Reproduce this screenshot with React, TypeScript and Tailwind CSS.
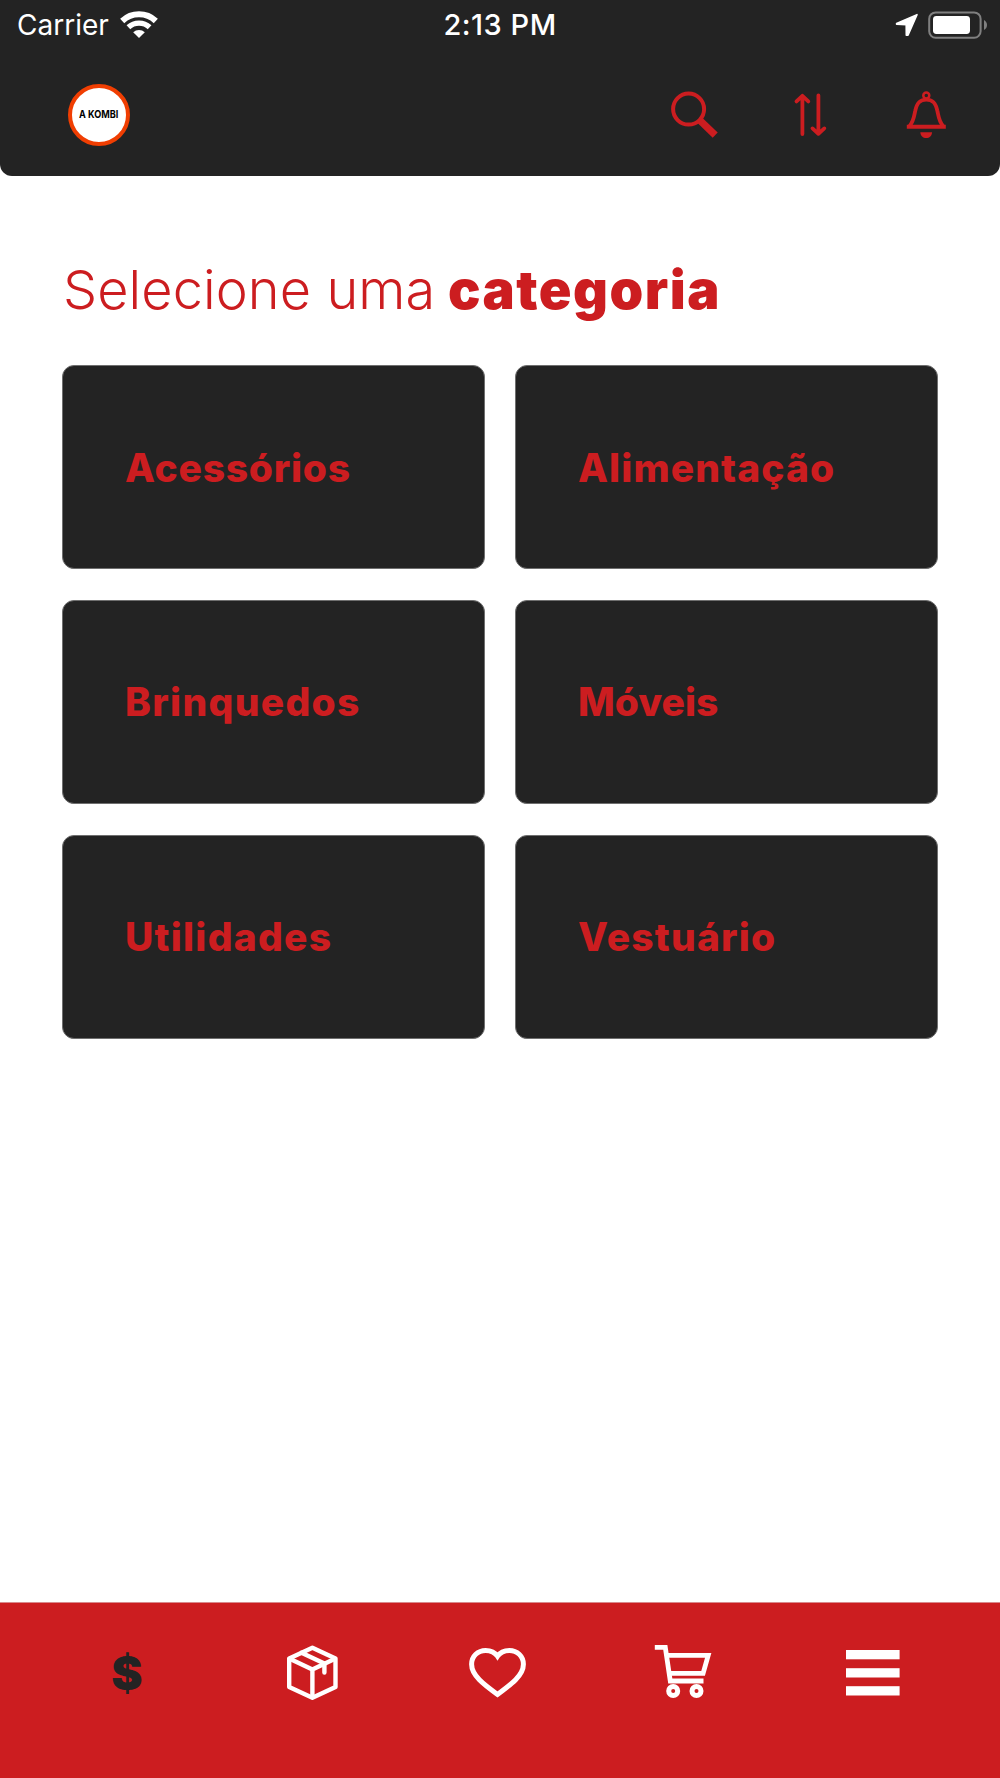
import type { ReactNode } from 'react'

type Category = {
  name: string
  tracking: string
}

const categories: Category[] = [
  { name: 'Acessórios', tracking: 'tracking-[0.75px]' },
  { name: 'Alimentação', tracking: 'tracking-[1.1px]' },
  { name: 'Brinquedos', tracking: 'tracking-[1.3px]' },
  { name: 'Móveis', tracking: 'tracking-[0px]' },
  { name: 'Utilidades', tracking: 'tracking-[1.25px]' },
  { name: 'Vestuário', tracking: 'tracking-[1.2px]' },
]

function StatusBar() {
  return (
    <div className="grid h-[50px] grid-cols-[1fr_auto_1fr] items-center pr-3 pl-[17px] text-white">
      <div className="flex items-center gap-[11px]">
        <span className="text-[28px] leading-[50px] font-normal">Carrier</span>
        <svg width="38" height="28" viewBox="0 0 38 28" fill="none" stroke="currentColor">
          <path d="M2.2 10 A24.5 24.5 0 0 1 35.8 10" strokeWidth="6" />
          <path d="M8.4 16.3 A15.5 15.5 0 0 1 29.6 16.3" strokeWidth="5.4" />
          <path d="M13.2 21.3 A8.4 8.4 0 0 1 24.8 21.3 L19 27 Z" fill="currentColor" stroke="none" />
        </svg>
      </div>
      <span className="-ml-[5px] text-center text-[29px] leading-[50px] font-medium tracking-[0.5px]">2:13 PM</span>
      <div className="flex items-center justify-end gap-[9px]">
        <svg width="24" height="24" viewBox="895 13 24 24" fill="currentColor" stroke="currentColor" strokeWidth="1.6" strokeLinejoin="round">
          <path d="M896.6 23.4 L917 14.7 L908 35.2 L906.3 35.2 L906.2 24.7 L896.6 24.3 Z" />
        </svg>
        <svg width="60" height="28" viewBox="928 10 60 28">
          <rect x="929.2" y="11.4" width="51.4" height="25.4" rx="6.5" fill="none" stroke="#808080" strokeWidth="2" />
          <rect x="933" y="15" width="37" height="18" rx="3.4" fill="#fff" />
          <path d="M984 19 C988 21 988 27 984 29 Z" fill="#808080" />
        </svg>
      </div>
    </div>
  )
}

function Logo() {
  return (
    <div className="flex h-[62px] w-[62px] items-center justify-center rounded-full border-4 border-[#f03e02] bg-white pb-[2px]">
      <span className="scale-x-[0.83] text-[11px] leading-none font-bold whitespace-nowrap text-black">A KOMBI</span>
    </div>
  )
}

function SearchIcon() {
  return (
    <svg width="48" height="48" viewBox="671 91 48 48" fill="none" stroke="currentColor">
      <circle cx="688.6" cy="109.1" r="15.5" strokeWidth="4" />
      <path d="M699.5 120 L715.2 135.2" strokeWidth="7.2" />
    </svg>
  )
}

function SortIcon() {
  return (
    <svg width="34" height="48" viewBox="793 91 34 48" fill="none" stroke="currentColor" strokeWidth="3.8" strokeLinecap="round" strokeLinejoin="round">
      <path d="M802.4 134 V95.8 M796.5 101.4 L802.4 95.8 L808.3 101.4" />
      <path d="M818.4 95.5 V133.8 M812.5 128.4 L818.4 133.8 L824.3 128.4" />
    </svg>
  )
}

function BellIcon() {
  return (
    <svg width="40" height="48" viewBox="906 91 40 48" fill="none" stroke="currentColor">
      <circle cx="926.3" cy="95.4" r="3" strokeWidth="2.5" />
      <path d="M909.5 126 C914 121 914 116 915.3 110.5 C917 102.5 920 99.6 926.3 99.6 C932.6 99.6 935.6 102.5 937.3 110.5 C938.6 116 938.6 121 943.1 126" strokeWidth="3.8" />
      <path d="M906.8 126.8 H945.8" strokeWidth="3.9" />
      <path d="M920.3 132.2 H932.1 C931.8 136 929.5 138 926.2 138 C922.9 138 920.6 136 920.3 132.2 Z" fill="currentColor" stroke="none" />
    </svg>
  )
}

function TabItem({ children }: { children: ReactNode }) {
  return <button className="flex h-[60px] w-[60px] items-center justify-center">{children}</button>
}

function TabBar() {
  return (
    <nav className="flex h-[176px] items-start justify-between border-t border-[#d98a8c] bg-[#cc1d20] px-[97px] pt-[40px] text-white">
      <TabItem>
        <span className="text-[47px] leading-[60px] font-black text-[#232323]">$</span>
      </TabItem>
      <TabItem>
        <svg width="60" height="60" viewBox="284 1643 60 60" fill="none" stroke="currentColor" strokeWidth="4.4" strokeLinejoin="round">
          <path d="M312.4 1647.8 L335.5 1658.6 V1687 L312.4 1697.8 L289.2 1687 V1658.6 Z" />
          <path d="M289.2 1658.6 L312.4 1669.6 L335.5 1658.6 M312.4 1669.6 V1697.5" />
          <path d="M301.5 1652.8 L324.4 1663.4 V1672.5" strokeLinecap="round" />
        </svg>
      </TabItem>
      <TabItem>
        <svg className="overflow-visible" width="60" height="60" viewBox="470 1643 60 60" fill="none" stroke="currentColor" strokeWidth="5">
          <path d="M497.5 1694.4 C484 1684.5 471.6 1675.5 471.6 1664.2 C471.6 1656 478 1650.4 485.6 1650.4 C490.5 1650.4 495 1652.4 497.5 1656.2 C500 1652.4 504.5 1650.4 509.4 1650.4 C517 1650.4 523.4 1656 523.4 1664.2 C523.4 1675.5 511 1684.5 497.5 1694.4 Z" />
        </svg>
      </TabItem>
      <TabItem>
        <svg className="overflow-visible" width="60" height="60" viewBox="656.5 1643 60 60" fill="none" stroke="currentColor" strokeWidth="4.8">
          <path d="M654.3 1647.4 H664.8 L669.8 1681 H703" />
          <path d="M666 1655.3 H707.7 L702.6 1673.4 H669" />
          <circle cx="672.7" cy="1691" r="4.5" strokeWidth="5" />
          <circle cx="696" cy="1691" r="4.5" strokeWidth="5" />
        </svg>
      </TabItem>
      <TabItem>
        <svg width="60" height="60" viewBox="843 1643 60 60" fill="currentColor">
          <rect x="846" y="1650" width="53.6" height="9.3" />
          <rect x="846" y="1668.2" width="53.6" height="9.3" />
          <rect x="846" y="1686.2" width="53.6" height="9.3" />
        </svg>
      </TabItem>
    </nav>
  )
}

export default function App() {
  return (
    <div className="flex h-[1778px] w-[1000px] flex-col overflow-hidden bg-white font-['Inter',sans-serif]">
      <header className="h-[176px] rounded-b-xl bg-[#232323]">
        <StatusBar />
        <div className="flex h-[130px] items-center justify-between pr-[54px] pl-[68px]">
          <Logo />
          <div className="flex items-center text-[#cc1d20]">
            <SearchIcon />
            <div className="ml-[74px] flex">
              <SortIcon />
            </div>
            <div className="ml-[79px] flex">
              <BellIcon />
            </div>
          </div>
        </div>
      </header>
      <main className="flex-1 px-[62px] pt-[84px]">
        <h1 className="flex h-[60px] items-center pl-px text-[54px] leading-[60px] whitespace-nowrap text-[#cc1d20]">
          <span className="w-[385px] font-light tracking-[0.1px]">Selecione uma</span>
          <span className="font-black tracking-[1.5px]">categoria</span>
        </h1>
        <div className="mt-[45px] grid grid-cols-[423px_423px] gap-x-[30px] gap-y-[30.8px]">
          {categories.map((category) => (
            <div key={category.name} className="flex h-[204px] items-center rounded-xl border border-[#6f6f6f] bg-[#232323] pl-[62px]">
              <span className={`text-[39px] leading-none font-extrabold text-[#cc1d20] ${category.tracking}`}>{category.name}</span>
            </div>
          ))}
        </div>
      </main>
      <TabBar />
    </div>
  )
}
